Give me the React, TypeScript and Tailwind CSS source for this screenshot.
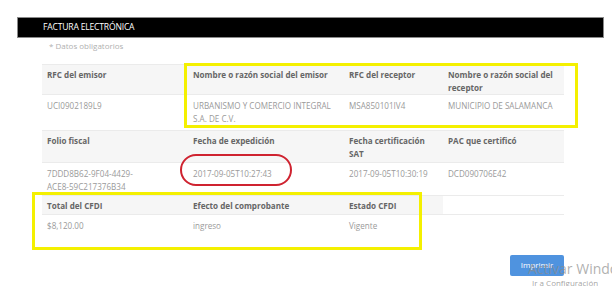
import React from 'react';

const rows: { header: string[]; data: string[][]; headerH: string; dataH: string }[] = [
  {
    header: ['RFC del emisor', 'Nombre o razón social del emisor', 'RFC del receptor', 'Nombre o razón social del receptor'],
    data: [['UCI0902189L9'], ['URBANISMO Y COMERCIO INTEGRAL', 'S.A. DE C.V.'], ['MSA850101IV4'], ['MUNICIPIO DE SALAMANCA']],
    headerH: 'h-[29px]',
    dataH: 'h-[36px]',
  },
  {
    header: ['Folio fiscal', 'Fecha de expedición', 'Fecha certificación SAT', 'PAC que certificó'],
    data: [['7DDD8B62-9F04-4429-', 'ACE8-59C217376B34'], ['2017-09-05T10:27:43'], ['2017-09-05T10:30:19'], ['DCD090706E42']],
    headerH: 'h-[32px]',
    dataH: 'h-[33px]',
  },
  {
    header: ['Total del CFDI', 'Efecto del comprobante', 'Estado CFDI', ''],
    data: [['$8,120.00'], ['ingreso'], ['Vigente'], []],
    headerH: 'h-[19px]',
    dataH: 'h-[28px]',
  },
];

export default function App() {
  return (
    <div className="relative w-[612px] h-[286px] overflow-hidden bg-white font-['Open_Sans',sans-serif]">
      <div className="pt-[17px] pl-[17px]">
        {/* Title bar */}
        <div className="flex items-center w-[587px] h-[21px] bg-black border border-[#8a8a8a] pl-[25px] text-[8.6px] text-white tracking-[-0.2px]">
          FACTURA ELECTRÓNICA
        </div>
        <p className="pl-[32px] pt-[2px] text-[8px] leading-[11px] text-[#b0b0b0]">* Datos obligatorios</p>

        {/* Data table */}
        <table className="ml-[25px] mt-[13px] w-[522px] table-fixed border-collapse text-[8.1px] leading-[13px]">
          <colgroup>
            <col className="w-[146px]" />
            <col className="w-[156px]" />
            <col className="w-[99px]" />
            <col className="w-[121px]" />
          </colgroup>
          <tbody>
            {rows.map((row, i) => (
              <React.Fragment key={i}>
                <tr className={`${row.headerH} border-t border-[#ebebeb]`}>
                  {row.header.map((h, j) => (
                    <th
                      key={j}
                      className={`align-top px-[5px] pt-[3px] text-left font-bold text-[#666] ${h ? 'bg-[#f6f6f6]' : 'bg-white'}`}
                    >
                      {h}
                    </th>
                  ))}
                </tr>
                <tr className={`${row.dataH} border-t border-[#ebebeb]`}>
                  {row.data.map((d, j) => (
                    <td key={j} className="align-top px-[5px] pt-[4px] text-[#9a9a9a]">
                      {d.map((line, k) => (
                        <div key={k}>{line}</div>
                      ))}
                    </td>
                  ))}
                </tr>
              </React.Fragment>
            ))}
          </tbody>
        </table>

        <div className="flex justify-end w-[547px] mt-[12px]">
          <button className="w-[54px] h-[21px] rounded-[2px] bg-[#4f93df] text-[8px] text-white">Imprimir</button>
        </div>
      </div>

      {/* Annotations drawn over the screenshot */}
      <div className="absolute left-[184px] top-[63px] w-[394px] h-[65px] border-[3px] border-[#f4f000]" />
      <div className="absolute left-[32px] top-[192px] w-[390px] h-[58px] border-[3px] border-[#f4f000]" />
      <div className="absolute left-[180px] top-[154px] w-[112px] h-[32px] border-2 border-[#cf2330] rounded-[16px]" />

      {/* Windows activation watermark */}
      <div className="absolute left-[528px] top-[261px] text-[14px] leading-[16px] text-[#8c8c8c]/70 whitespace-nowrap">
        Activar Windows
      </div>
      <div className="absolute left-[532px] top-[278px] text-[8px] leading-[10px] text-[#8c8c8c]/80 whitespace-nowrap">
        Ir a Configuración
      </div>
    </div>
  );
}
